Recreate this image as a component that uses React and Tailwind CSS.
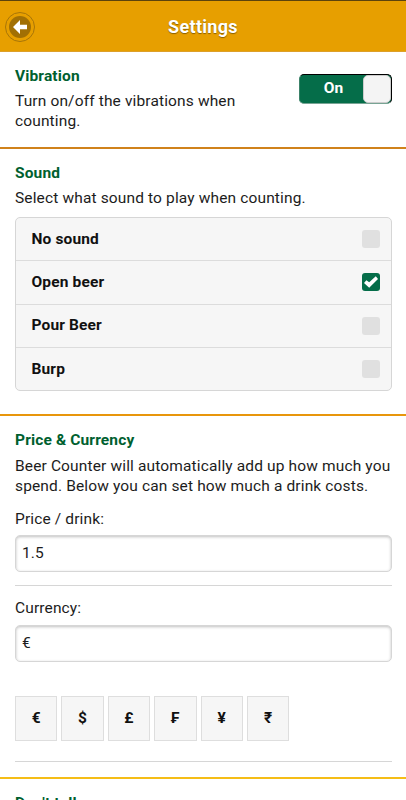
import React, { useState } from 'react';

const sounds = ['No sound', 'Open beer', 'Pour Beer', 'Burp'];
const currencies = ['€', '$', '£', '₣', '¥', '₹'];

function Header() {
  return (
    <header className="relative flex h-[52px] items-center justify-center border-t border-[#5c430c] bg-[#e79f00] shadow-[inset_0_-1px_0_#dda02a]">
      <button
        aria-label="Back"
        className="absolute left-[5px] top-[11px] flex size-[30px] items-center justify-center rounded-full border border-[#a87508]"
      >
        <span className="flex size-[22px] items-center justify-center rounded-full bg-[#a27004]">
          <svg viewBox="0 0 14 14" className="size-[14px]" fill="#fff">
            <path d="M7 0v4.8h7v4.4H7V14L0 7z" />
          </svg>
        </span>
      </button>
      <h1 className="text-[18px] font-bold leading-[26px] tracking-[0.3px] text-white [text-shadow:0_1px_1px_#8a6000]">Settings</h1>
    </header>
  );
}

function Title({ children }) {
  return <h2 className="text-[15.5px] font-bold leading-5 text-[#005f2f]">{children}</h2>;
}

function Field({ label, value, onChange }) {
  return (
    <label className="flex flex-col leading-5">
      {label}
      <input
        value={value}
        onChange={(e) => onChange(e.target.value)}
        className="mt-auto h-[37px] w-full rounded-[5px] border border-[#d6d6d6] bg-white px-[6px] pb-px shadow-[inset_0_1px_3px_rgba(0,0,0,0.25)] outline-none"
      />
    </label>
  );
}

export default function App() {
  const [vibration, setVibration] = useState(true);
  const [sound, setSound] = useState('Open beer');
  const [price, setPrice] = useState('1.5');
  const [currency, setCurrency] = useState('€');

  return (
    <div className="h-[800px] w-[406px] overflow-hidden bg-white font-['Roboto',sans-serif] text-[15.5px] tracking-[0.14px] text-[#1c1c1c]">
      <Header />

      <section className="flex h-[97px] justify-between border-b-2 border-[#d0821b] pl-[15px] pr-[14px] pt-[14px]">
        <div className="w-[240px]">
          <Title>Vibration</Title>
          <p className="mt-[5px] leading-5">Turn on/off the vibrations when counting.</p>
        </div>
        <button
          onClick={() => setVibration(!vibration)}
          className="mt-2 flex h-[30px] w-[93px] items-center rounded-[5px] border border-t-black border-r-black border-b-[#78a494] border-l-[#3c8269] bg-[#056d49] font-bold text-white"
        >
          <span className="flex-1 pl-1 text-center">{vibration ? 'On' : 'Off'}</span>
          <span className="h-7 w-7 rounded-[5px] border border-[#ccc] bg-[#f4f4f4]" />
        </button>
      </section>

      <section className="h-[267px] border-b-2 border-[#e8960c] pl-[15px] pr-[14px] pt-[14px]">
        <Title>Sound</Title>
        <p className="mt-[5px] leading-5">Select what sound to play when counting.</p>
        <ul className="mt-[9px] h-[174px] divide-y divide-[#dcdcdc] rounded-[5px] border border-[#d6d6d6] bg-[#f6f6f6]">
          {sounds.map((name) => (
            <li
              key={name}
              onClick={() => setSound(name)}
              className="flex h-[43.25px] items-center justify-between pl-[15.5px] pr-[11px] font-bold text-[#111]"
            >
              {name}
              <span
                className={
                  sound === name
                    ? 'flex size-[18px] items-center justify-center rounded-[3px] bg-[#056d49]'
                    : 'size-[18px] rounded-[3px] bg-[#e0e0e0]'
                }
              >
                {sound === name && (
                  <svg viewBox="0 0 14 14" className="size-[14px]" fill="#fff">
                    <path d="M14 4L11.8 1.2 5.2 7.3 2.4 5.2 0 8l5.2 4.8z" />
                  </svg>
                )}
              </span>
            </li>
          ))}
        </ul>
      </section>

      <section className="h-[363px] border-b-2 border-[#f5bd16] pl-[15px] pr-[14px] pt-[14px]">
        <Title>Price &amp; Currency</Title>
        <p className="mt-[6px] leading-5">
          Beer Counter will automatically add up how much you spend. Below you can set how much a drink costs.
        </p>
        <div className="mt-[13px] grid h-[77px] border-b border-[#d6d6d6] pb-[13px]">
          <Field label="Price / drink:" value={price} onChange={setPrice} />
        </div>
        <div className="border-b border-[#d6d6d6] pb-5 pt-3">
          <div className="grid h-16">
            <Field label="Currency:" value={currency} onChange={setCurrency} />
          </div>
          <div className="mt-[34px] flex gap-1">
            {currencies.map((symbol) => (
              <button
                key={symbol}
                onClick={() => setCurrency(symbol)}
                className="h-[45px] w-[42.4px] border border-[#dedede] bg-[#f6f6f6] font-bold text-[#111]"
              >
                {symbol}
              </button>
            ))}
          </div>
        </div>
      </section>

      <section className="pl-[15px] pr-[14px] pt-[14px]">
        <Title>Don't tell me</Title>
      </section>
    </div>
  );
}
